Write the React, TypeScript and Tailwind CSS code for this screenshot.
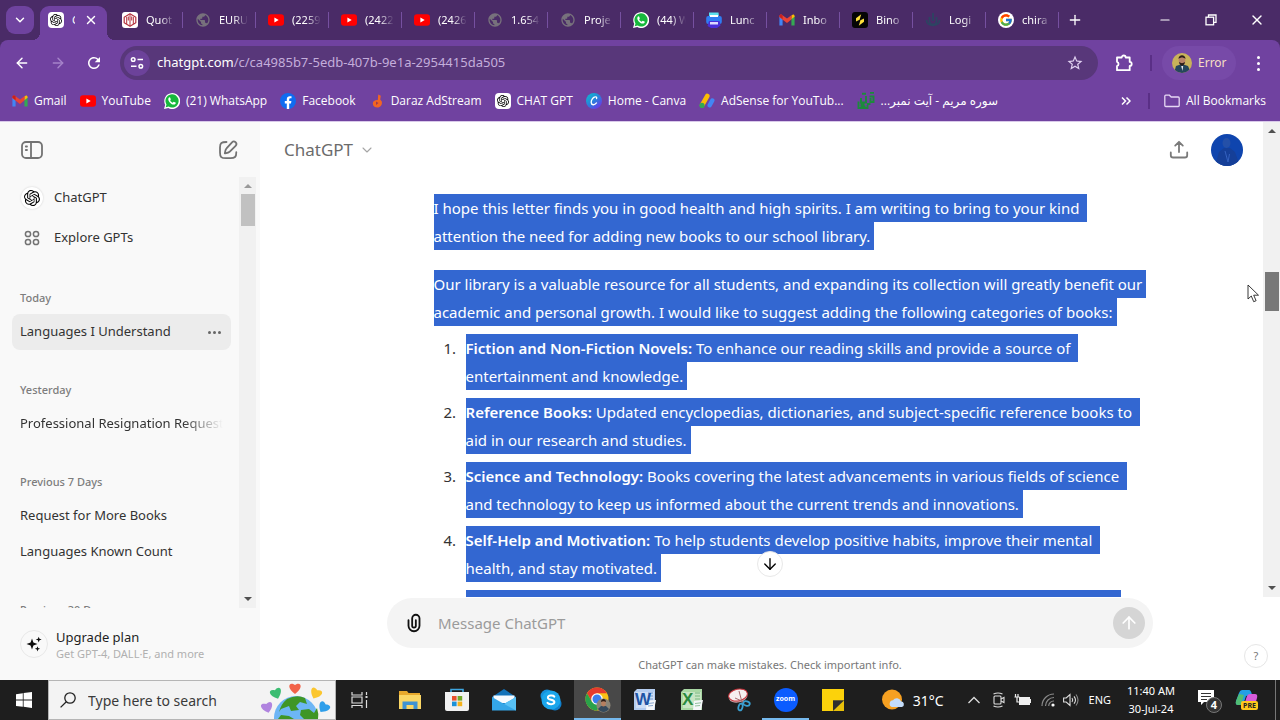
import type { ReactNode } from "react";
import { ArrowDown, ArrowLeft, ArrowRight, ArrowUp, ChevronDown, Minus, Plus, X } from "lucide-react";
import { SiOpenai } from "react-icons/si";
import { FcGoogle } from "react-icons/fc";
import { MdPublic, MdRefresh, MdStarBorder } from "react-icons/md";

/* ---------- site icons ---------- */

const YouTubeIcon = () => (
  <svg viewBox="0 0 16 16" className="size-4 shrink-0">
    <rect x="0" y="2.2" width="16" height="11.6" rx="3" fill="#f00" />
    <path d="M6.4 5.5v5l4.3-2.5z" fill="#fff" />
  </svg>
);

const GmailIcon = () => (
  <svg viewBox="0 0 16 16" className="size-4 shrink-0">
    <path d="M0.4 4v9.4h3.2V6.6z" fill="#4285f4" />
    <path d="M15.6 4v9.4h-3.2V6.6z" fill="#34a853" />
    <path d="M12.4 3.6v3.6l3.2-2.4V4c0-1.600-1.700-2-2.500-1z" fill="#fbbc04" />
    <path d="M0.400 4v1.200L8 11l4.400-3.400V3.300L8 6.600 3.100 2.900C2 2 .4 2.600.4 4z" fill="#ea4335" />
    <path d="M0.400 4.800l3.200 2.400V3.300L2.900 2.800C1.900 2.100.4 2.600.4 4z" fill="#c5221f" />
  </svg>
);

const WhatsAppIcon = () => (
  <svg viewBox="0 0 16 16" className="size-4 shrink-0">
    <path d="M0 16l1.200-4.200A8 8 0 1 1 4.300 15z" fill="#fff" />
    <path d="M1.700 14.300l.8-2.800A6.600 6.600 0 1 1 4.700 13.600z" fill="#16b83c" />
    <path
      d="M5.700 4.300c-.7 0-1.400.8-1.400 1.900 0 2.400 3 5.400 5.500 5.400 1.200 0 2-.8 2-1.600 0-.4-1.800-1.300-2.100-1.200-.4.100-.7.900-1 .9-.7 0-2.400-1.500-2.500-2.200 0-.4.600-.7.600-1 0-.4-.6-2.200-1.100-2.200z"
      fill="#fff"
    />
  </svg>
);

const FacebookIcon = () => (
  <svg viewBox="0 0 16 16" className="size-4 shrink-0">
    <circle cx="8" cy="8" r="8" fill="#0f6cf0" />
    <path d="M6.800 16v-5.500H4.800V8.100h2V6.400c0-2.100 1.200-3.200 3-3.200l1.700.1v2h-1c-1 0-1.300.6-1.300 1.200v1.600h2.200l-.4 2.400H9.200V16z" fill="#fff" />
  </svg>
);

const DarazIcon = () => (
  <svg viewBox="0 0 16 16" className="size-4 shrink-0">
    <path d="M9.200 1.500l2.600 1.200-.6 3.800 1.600 2c.7 3.500-1.500 6-4.400 6-2.600 0-4.600-1.500-4.600-4 0-2.200 1.900-3.500 5-3.400z" fill="#f26522" />
    <path d="M7 8.500l2.500 1.600L7 12z" fill="#a33a4c" />
  </svg>
);

const OpenAiTile = () => (
  <span className="flex size-4 shrink-0 items-center justify-center rounded-sm bg-white text-black">
    <SiOpenai className="size-3" />
  </span>
);

const CanvaIcon = () => (
  <svg viewBox="0 0 16 16" className="size-4 shrink-0">
    <defs>
      <linearGradient id="canva" x1="0" y1="0" x2="0.8" y2="1">
        <stop offset="0" stopColor="#08c4cc" />
        <stop offset="0.55" stopColor="#2b7fdc" />
        <stop offset="1" stopColor="#7330e8" />
      </linearGradient>
    </defs>
    <circle cx="8" cy="8" r="8" fill="url(#canva)" />
    <path d="M10.600 5.600c.5-1.400-.6-2-1.700-1.700C6.800 4.400 5 7.300 5.200 9.600c.2 2.600 3.200 3 5.300.3" fill="none" stroke="#fff" strokeWidth="1.300" strokeLinecap="round" />
  </svg>
);

const AdSenseIcon = () => (
  <svg viewBox="0 0 16 16" className="size-4 shrink-0">
    <path d="M8.300 3L3.200 12" stroke="#fbbc04" strokeWidth="4.600" strokeLinecap="round" />
    <circle cx="3" cy="12.400" r="2.600" fill="#34a853" />
    <path d="M13.300 7.500l-2.600 4.800" stroke="#4285f4" strokeWidth="4.400" strokeLinecap="round" />
  </svg>
);

const QuranIcon = () => (
  <svg viewBox="0 0 18 18" className="size-[18px] shrink-0" fill="none" stroke="#1c8a3c" strokeWidth="1.900">
    <path d="M5 1.800h4M13 .9h4M12.500 4.500h4v5.500h-3V6M9 4v6.500H3M4 6v4M1.500 9.500v6.500h9V13M3.500 12.500h4M3.500 14.500h5M10 12h3.500" />
  </svg>
);

const GlobeIcon = () => <MdPublic className="size-4 shrink-0 text-[#77717c]" />;

const QuotexIcon = () => (
  <svg viewBox="0 0 16 16" className="size-4 shrink-0">
    <rect width="16" height="16" rx="3" fill="#fff" />
    <path d="M2.200 5.200L8 1.800l5.800 3.400v5.600L8 14.200l-5.800-3.400z" fill="none" stroke="#b5323d" strokeWidth="1.200" strokeLinejoin="round" />
    <path d="M4.700 5v7M8 2v12M11.300 5v7M6.300 4.500v4M9.700 4.500v4" stroke="#b5323d" strokeWidth="1" />
  </svg>
);

const PrinterIcon = () => (
  <svg viewBox="0 0 16 16" className="size-4 shrink-0">
    <path d="M3 0.500h9.500L13 5H3z" fill="#5be0ee" />
    <rect x="0.200" y="4" width="15.600" height="8" rx="2" fill="#2f7df2" />
    <path d="M3 9h10.500l1 4.500L11 16H5l-3.500-2z" fill="#4a2fd8" />
    <rect x="4" y="3" width="8" height="2" fill="#fff" />
    <rect x="4" y="10" width="8" height="2.500" fill="#dcd9ff" />
  </svg>
);

const BinomoIcon = () => (
  <svg viewBox="0 0 16 16" className="size-4 shrink-0">
    <rect width="16" height="16" rx="3" fill="#050505" />
    <path d="M9.200 2.200L4 6.200v3.200l3.600-1.600z" fill="#ffe03a" />
    <path d="M6.800 13.800L12 9.800V6.600L8.400 8.200z" fill="#ffe03a" />
  </svg>
);

const LoginIcon = () => (
  <svg viewBox="0 0 16 16" className="size-4 shrink-0" fill="none" stroke="#2d4462" strokeWidth="1.800">
    <path d="M8 1v8M4.500 5v4a3.500 3.500 0 0 0 7 0V5M1.500 8c0 7 13 7 13 0" />
  </svg>
);

/* ---------- browser chrome ---------- */

const tabs: { title: string; icon: ReactNode }[] = [
  { title: "Quot", icon: <QuotexIcon /> },
  { title: "EURU", icon: <GlobeIcon /> },
  { title: "(2259", icon: <YouTubeIcon /> },
  { title: "(2422", icon: <YouTubeIcon /> },
  { title: "(2426", icon: <YouTubeIcon /> },
  { title: "1.654", icon: <GlobeIcon /> },
  { title: "Proje", icon: <GlobeIcon /> },
  { title: "(44) W", icon: <WhatsAppIcon /> },
  { title: "Lunc", icon: <PrinterIcon /> },
  { title: "Inbo", icon: <GmailIcon /> },
  { title: "Bino", icon: <BinomoIcon /> },
  { title: "Logi", icon: <LoginIcon /> },
  { title: "chira", icon: <span className="flex size-4 shrink-0 items-center justify-center rounded-full bg-white"><FcGoogle className="size-3.5" /></span> },
];

const bookmarks: { title: string; icon: ReactNode; rtl?: boolean }[] = [
  { title: "Gmail", icon: <GmailIcon /> },
  { title: "YouTube", icon: <YouTubeIcon /> },
  { title: "(21) WhatsApp", icon: <WhatsAppIcon /> },
  { title: "Facebook", icon: <FacebookIcon /> },
  { title: "Daraz AdStream", icon: <DarazIcon /> },
  { title: "CHAT GPT", icon: <OpenAiTile /> },
  { title: "Home - Canva", icon: <CanvaIcon /> },
  { title: "AdSense for YouTub...", icon: <AdSenseIcon /> },
  { title: "سوره مریم - آیت نمبر...", icon: <QuranIcon />, rtl: true },
];

function TabStrip() {
  return (
    <div className="flex h-10 items-end bg-[#4a2b67] text-white">
      <button aria-label="Search tabs" className="mb-1.5 ml-1.5 flex size-7 shrink-0 items-center justify-center rounded-[9px] bg-[#6f439f]">
        <ChevronDown className="size-3.5" strokeWidth={2.5} />
      </button>
      <div className="relative ml-1.5 mr-[3px] flex h-[34px] w-[67px] shrink-0 items-center rounded-t-[9px] bg-[#7042a0] px-2 pb-1.5 before:absolute before:-left-2 before:bottom-0 before:size-2 before:bg-[radial-gradient(circle_at_0_0,transparent_8px,#7042a0_8px)] after:absolute after:-right-2 after:bottom-0 after:size-2 after:bg-[radial-gradient(circle_at_100%_0,transparent_8px,#7042a0_8px)]">
        <OpenAiTile />
        <span className="ml-2 w-[3px] overflow-hidden text-[11px]">C</span>
        <button aria-label="Close tab" className="ml-[9px]">
          <X className="size-3.5" strokeWidth={2.5} />
        </button>
      </div>
      {tabs.map((t) => (
        <div key={t.title} className="mb-2.5 flex h-5 w-[73px] shrink-0 items-center pl-3 after:ml-auto after:h-4 after:w-px after:bg-[#7650a0]">
          {t.icon}
          <span className="ml-2 text-[11px] leading-5 whitespace-nowrap [mask-image:linear-gradient(to_right,#000_14px,transparent_29px)]">{t.title}</span>
        </div>
      ))}
      <button aria-label="New tab" className="mb-1.5 ml-0.5 flex size-7 shrink-0 items-center justify-center">
        <Plus className="size-4" strokeWidth={2} />
      </button>
      <div className="mb-px ml-auto flex h-[39px] shrink-0">
        <button aria-label="Minimize" className="flex w-[46px] items-center justify-center">
          <Minus className="size-3.5" strokeWidth={2} />
        </button>
        <button aria-label="Restore" className="flex w-[46px] items-center justify-center">
          <svg viewBox="0 0 12 12" className="size-3" fill="none" stroke="#fff" strokeWidth="1.300">
            <rect x="1" y="3.200" width="7.600" height="7.600" />
            <path d="M3.500 3.200V1h7.500v7.300H8.600" />
          </svg>
        </button>
        <button aria-label="Close" className="flex w-[46px] items-center justify-center">
          <X className="size-4" strokeWidth={2} />
        </button>
      </div>
    </div>
  );
}

function Toolbar() {
  return (
    <div className="flex h-[46px] items-center pl-1 text-white">
      <button aria-label="Back" className="flex w-9 shrink-0 justify-center"><ArrowLeft className="size-4" strokeWidth={2.2} /></button>
      <button aria-label="Forward" className="flex w-9 shrink-0 justify-center text-[#a583c9]"><ArrowRight className="size-4" strokeWidth={2.2} /></button>
      <button aria-label="Reload" className="flex w-9 shrink-0 justify-center"><MdRefresh className="size-[18px]" /></button>
      <div className="ml-2 flex h-[34px] min-w-0 flex-1 items-center rounded-full bg-[#58377a] px-1">
        <button aria-label="View site information" className="flex size-[26px] shrink-0 items-center justify-center rounded-full bg-[#6c429a]">
          <svg viewBox="0 0 14 14" className="size-3.5" fill="none" stroke="#fff" strokeWidth="1.500">
            <circle cx="3.200" cy="3.500" r="1.800" />
            <path d="M7.500 3.500H13M1 10.300h5.500" />
            <circle cx="10.800" cy="10.300" r="1.800" />
          </svg>
        </button>
        <div className="ml-[7px] flex-1 truncate text-[13px] text-[#c4aedb]" role="textbox" aria-label="Address">
          <span className="text-white">chatgpt.com</span>/c/ca4985b7-5edb-407b-9e1a-2954415da505
        </div>
        <button aria-label="Bookmark this tab" className="mr-2.5 text-[#e0d0f0]"><MdStarBorder className="size-[18px]" /></button>
      </div>
      <button aria-label="Extensions" className="ml-4 flex w-5 justify-center">
        <svg viewBox="0 0 20 20" className="size-5" fill="none" stroke="#fff" strokeWidth="1.800" strokeLinejoin="round">
          <path d="M3 4.500h4.700a2 2 0 0 1 4 0h4v4.400a2 2 0 0 1 0 4V17.200H3V13a2.200 2.200 0 0 0 0-4.200z" />
        </svg>
      </button>
      <span className="ml-4 h-4 w-0.5 bg-[#5a2f86]" />
      <button className="ml-2.5 flex h-[34px] w-[74px] items-center gap-1.5 rounded-full bg-[#774aa8] pl-2.5 text-[12px] text-[#f6dfc4]">
        <svg viewBox="0 0 20 20" className="size-5 shrink-0">
          <defs><clipPath id="face"><circle cx="10" cy="10" r="10" /></clipPath></defs>
          <g clipPath="url(#face)">
            <rect width="20" height="20" fill="#c8b25a" />
            <path d="M2 20l2-7 6-2 6 2 3 7z" fill="#25465c" />
            <ellipse cx="10" cy="7.500" rx="3.300" ry="4.500" fill="#b98468" />
            <path d="M6.500 6c0-5 7-5 7 0-2-2-5-2-7 0zM7 9c1 5 5 5 6 0-2 1.500-4 1.500-6 0z" fill="#2a1d1a" />
            <path d="M9.200 13h2l-.7 5z" fill="#e8e8ee" />
          </g>
        </svg>
        Error
      </button>
      <button aria-label="Menu" className="flex w-11 flex-col items-center gap-[3px]">
        <span className="size-[3px] rounded-full bg-white" />
        <span className="size-[3px] rounded-full bg-white" />
        <span className="size-[3px] rounded-full bg-white" />
      </button>
    </div>
  );
}

function BookmarksBar() {
  return (
    <nav aria-label="Bookmarks" className="flex h-9 items-center border-b border-[#d9c9ea] pb-1.5 pl-3 pr-3.5 font-['Open_Sans','DejaVu_Sans',sans-serif] text-[12px] whitespace-nowrap text-white">
      <div className="flex gap-[13px]">
        {bookmarks.map((b) => (
          <a key={b.title} href="#" className="flex items-center gap-1.5">
            {b.icon}
            <span dir={b.rtl ? "rtl" : "ltr"}>{b.title}</span>
          </a>
        ))}
      </div>
      <button aria-label="More bookmarks" className="ml-auto">
        <svg viewBox="0 0 10 10" className="size-2.5" fill="none" stroke="#fff" strokeWidth="1.500"><path d="M1 1.500L4.500 5 1 8.500M5.500 1.500L9 5 5.500 8.500" /></svg>
      </button>
      <span className="ml-[17px] h-4 w-0.5 bg-[#5a2f86]" />
      <button className="ml-3.5 flex items-center gap-1.5">
        <svg viewBox="0 0 16 14" className="h-3.5 w-4" fill="none" stroke="#e6d8f4" strokeWidth="1.300"><path d="M.8 2.200q0-1 1-1h3.600l1.800 1.800h7q1 0 1 1v7.500q0 1-1 1H1.800q-1 0-1-1z" /></svg>
        All Bookmarks
      </button>
    </nav>
  );
}

/* ---------- sidebar ---------- */

const Triangle = ({ down = false, color }: { down?: boolean; color: string }) => (
  <svg viewBox="0 0 8 4" className="h-1 w-2"><path d={down ? "M0 0h8L4 4z" : "M0 4h8L4 0z"} fill={color} /></svg>
);

const groups = [
  { name: "Today", items: ["Languages I Understand"] },
  { name: "Yesterday", items: ["Professional Resignation Request"] },
  { name: "Previous 7 Days", items: ["Request for More Books", "Languages Known Count"] },
  { name: "Previous 30 Days", items: [] },
];

function Sidebar() {
  return (
    <aside className="flex w-[260px] shrink-0 flex-col bg-[#f9f9f9] text-[13px] text-[#333]">
      <div className="flex h-[55px] shrink-0 items-center justify-between pl-[21px] pr-[22px] text-[#737373]">
        <button aria-label="Close sidebar">
          <svg viewBox="0 0 22 18" className="h-[18px] w-[22px]" fill="none" stroke="currentColor" strokeWidth="1.800" strokeLinecap="round">
            <rect x="1" y="1" width="20" height="16" rx="4" />
            <path d="M10 1v16M4.800 5.500h1.200M4.800 9h1.200" />
          </svg>
        </button>
        <button aria-label="New chat">
          <svg viewBox="0 0 20 20" className="size-5" fill="none" stroke="currentColor" strokeWidth="1.800" strokeLinecap="round" strokeLinejoin="round">
            <path d="M8.500 2C3.500 2 2 2.800 2 7.500v5C2 17 3.200 18.200 8 18.200h4.500c4.300 0 5.800-1.200 5.800-6" />
            <path d="M14 2.300a2.500 2.500 0 0 1 3.600 3.500l-5.800 5.900c-1.200 1.200-3 1.400-5 1.700.3-2 .5-3.800 1.700-5z" />
          </svg>
        </button>
      </div>
      <div className="flex min-h-0 flex-1 pr-1">
        <nav aria-label="Chat history" className="min-w-0 flex-1 overflow-hidden pl-3 pr-2 pt-px">
          <a href="#" className="flex h-10 items-center gap-[11px] pl-[9px]">
            <span className="flex size-[22px] items-center justify-center rounded-full bg-white shadow-[0_0_2px_#ccc]"><SiOpenai className="size-4 text-black" /></span>
            ChatGPT
          </a>
          <a href="#" className="flex h-10 items-center gap-[11px] pl-[9px]">
            <svg viewBox="0 0 22 22" className="size-[22px]" fill="none" stroke="#737373" strokeWidth="1.500">
              <circle cx="7" cy="7" r="2.600" /><circle cx="15" cy="7" r="2.600" />
              <circle cx="7" cy="15" r="2.600" /><circle cx="15" cy="15" r="2.600" />
            </svg>
            Explore GPTs
          </a>
          {groups.map((g) => (
            <section key={g.name} className="mt-5">
              <h3 className="flex h-9 items-center pl-2 pt-1 text-[11px] font-medium text-[#7d7d7d]">{g.name}</h3>
              {g.items.map((item) => (
                <div key={item} className={item === "Languages I Understand" ? "flex h-9 items-center rounded-lg bg-[#ececec] px-2" : "flex h-9 items-center px-2"}>
                  <a href="#" className={item.startsWith("Professional") ? "flex-1 overflow-hidden whitespace-nowrap [mask-image:linear-gradient(to_right,#000_80%,transparent)]" : "flex-1 overflow-hidden whitespace-nowrap"}>{item}</a>
                  {item === "Languages I Understand" && (
                    <button aria-label="Options" className="mr-0.5 flex gap-0.5">
                      <span className="size-[3px] rounded-full bg-[#666]" /><span className="size-[3px] rounded-full bg-[#666]" /><span className="size-[3px] rounded-full bg-[#666]" />
                    </button>
                  )}
                </div>
              ))}
            </section>
          ))}
        </nav>
        <div className="flex w-[17px] shrink-0 flex-col items-center bg-[#f1f1f1] py-[7px]" aria-hidden="true">
          <Triangle color="#999" />
          <span className="mt-1.5 h-8 w-3.5 bg-[#c1c1c1]" />
          <span className="mt-auto"><Triangle down color="#505050" /></span>
        </div>
      </div>
      <button className="flex h-[72px] shrink-0 items-center gap-2 pl-5 text-left">
        <span className="flex size-7 items-center justify-center rounded-full border border-[#e8e8e8]">
          <svg viewBox="0 0 16 16" className="size-4" fill="#0d0d0d">
            <path d="M6 2.500l1.400 4.100L11.500 8 7.400 9.400 6 13.500 4.600 9.400.5 8l4.100-1.400zM12.700.7l.8 2 2.200.8-2.200.8-.8 2.200-.8-2.200-2.200-.8 2.200-.8zM11.500 10.300l.7 1.800 1.900.7-1.900.7-.7 1.900-.7-1.900-1.900-.7 1.900-.7z" />
          </svg>
        </span>
        <span className="flex flex-col pt-0.5">
          <span className="leading-[18px] text-[#1f1f1f]">Upgrade plan</span>
          <span className="text-[11px] leading-4 text-[#b0b0b0]">Get GPT-4, DALL·E, and more</span>
        </span>
      </button>
    </aside>
  );
}

/* ---------- conversation ---------- */

function Line({ children, wrapped = false }: { children: ReactNode; wrapped?: boolean }) {
  return <span className={wrapped ? "block w-fit bg-[#3367d1] pr-2 whitespace-nowrap" : "block w-fit bg-[#3367d1] pr-1 whitespace-nowrap"}>{children}</span>;
}

const suggestions = [
  { title: "Fiction and Non-Fiction Novels:", first: "To enhance our reading skills and provide a source of", second: "entertainment and knowledge." },
  { title: "Reference Books:", first: "Updated encyclopedias, dictionaries, and subject-specific reference books to", second: "aid in our research and studies." },
  { title: "Science and Technology:", first: "Books covering the latest advancements in various fields of science", second: "and technology to keep us informed about the current trends and innovations." },
  { title: "Self-Help and Motivation:", first: "To help students develop positive habits, improve their mental", second: "health, and stay motivated." },
  { title: "History and Culture:", first: "Books on world history, local heritage, and diverse cultures to broaden", second: "our understanding." },
];

function Conversation() {
  return (
    <main className="flex min-w-0 flex-1 flex-col bg-white">
      <div className="relative flex min-h-0 flex-1">
        <div className="flex min-w-0 flex-1 flex-col">
          <header className="flex h-14 shrink-0 items-center pl-6 pr-5">
            <button className="flex items-center gap-1.5 text-[17px] text-[#6b6b6b]">
              ChatGPT <ChevronDown className="size-4 text-[#a5a5a5]" strokeWidth={1.6} />
            </button>
            <button aria-label="Share" className="ml-auto">
              <svg viewBox="0 0 20 20" className="size-5" fill="none" stroke="#7a7a7a" strokeWidth="1.800" strokeLinecap="round" strokeLinejoin="round">
                <path d="M10 12V2.200M6.200 5.600L10 1.800l3.800 3.800M1.800 12.500v2.700q0 2.300 2.300 2.300h11.800q2.300 0 2.300-2.300v-2.700" />
              </svg>
            </button>
            <button aria-label="Account" className="ml-[22px]">
              <svg viewBox="0 0 32 32" className="size-8">
                <defs><clipPath id="account"><circle cx="16" cy="16" r="16" /></clipPath></defs>
                <g clipPath="url(#account)">
                  <rect width="32" height="32" fill="#0f45ae" />
                  <path d="M4 32l4-14 5-4h6l5 4 5 14z" fill="#153f98" />
                  <ellipse cx="15.500" cy="9" rx="4" ry="5" fill="#2450a8" />
                  <path d="M14 17l3 11 1.500-8" fill="none" stroke="#3562c0" />
                </g>
              </svg>
            </button>
          </header>
          <div className="min-h-0 flex-1 overflow-hidden pl-4">
            <article className="mx-auto max-w-[768px] pl-12 pt-4 text-[15px] leading-7 text-white">
              <p className="mb-5">
                <Line wrapped>I hope this letter finds you in good health and high spirits. I am writing to bring to your kind</Line>
                <Line>attention the need for adding new books to our school library.</Line>
              </p>
              <p className="mb-2">
                <Line>Our library is a valuable resource for all students, and expanding its collection will greatly benefit our</Line>
                <Line>academic and personal growth. I would like to suggest adding the following categories of books:</Line>
              </p>
              <ol className="flex flex-col gap-2">
                {suggestions.map((s, i) => (
                  <li key={s.title} className="flex">
                    <span className="w-8 shrink-0 pl-2.5 text-[#333]">{i + 1}.</span>
                    <div>
                      <Line wrapped><b className="font-semibold">{s.title}</b> {s.first}</Line>
                      <Line>{s.second}</Line>
                    </div>
                  </li>
                ))}
              </ol>
            </article>
          </div>
        </div>
        <div className="flex w-[17px] shrink-0 flex-col items-center bg-[#f1f1f1] py-[7px]" aria-hidden="true">
          <Triangle color="#505050" />
          <span className="mt-[139px] h-[39px] w-3.5 bg-[#787878]" />
          <span className="mt-auto"><Triangle down color="#505050" /></span>
        </div>
        <button aria-label="Scroll to bottom" className="absolute bottom-5 left-1/2 flex size-[26px] -translate-x-1/2 items-center justify-center rounded-full border border-[#e8e8e8] bg-white text-black">
          <ArrowDown className="size-[18px]" strokeWidth={1.8} />
        </button>
      </div>
      <div className="relative flex h-[83px] shrink-0 flex-col items-center px-4">
        <form className="mt-px flex h-[50px] w-full max-w-[766px] items-center rounded-full bg-[#f4f4f4] pl-4 pr-2">
          <button type="button" aria-label="Attach files" className="shrink-0">
            <svg viewBox="0 0 24 24" className="size-[22px]" fill="#111">
              <path d="M9 7a5 5 0 0 1 10 0v8a7 7 0 1 1-14 0V9a1 1 0 0 1 2 0v6a5 5 0 0 0 10 0V7a3 3 0 1 0-6 0v8a1 1 0 1 0 2 0V9a1 1 0 1 1 2 0v6a3 3 0 1 1-6 0z" />
            </svg>
          </button>
          <input aria-label="Message ChatGPT" placeholder="Message ChatGPT" className="ml-[13px] min-w-0 flex-1 bg-transparent text-[15px] outline-none placeholder:text-[#9b9b9b]" />
          <button type="button" aria-label="Send" className="flex size-8 shrink-0 items-center justify-center rounded-full bg-[#d5d5d5] text-white">
            <ArrowUp className="size-5" />
          </button>
        </form>
        <p className="mt-[7px] text-[11px] leading-5 text-[#777]">ChatGPT can make mistakes. Check important info.</p>
        <button aria-label="Help" className="absolute right-3 bottom-3 flex size-6 items-center justify-center rounded-full border border-[#e6e6e6] text-[11px] text-[#777]">?</button>
      </div>
    </main>
  );
}

/* ---------- taskbar ---------- */

const Office = ({ letter, color, light }: { letter: string; color: string; light: string }) => (
  <svg viewBox="0 0 24 24" className="size-6">
    <path d="M1 4l3-3h18v21H1z" fill={light} />
    <path d="M3 4h18v16H3z" fill="#fff" opacity="0.350" />
    <path d="M15 5h5M15 8h5M15 11h5" stroke={color} opacity="0.500" />
    <path d="M14 13l9-1-2 10h-8z" fill="#f5f7fa" />
    <path d="M15 15.500l6-.7M15 18l5-.5" stroke={color} opacity="0.500" />
    <text x="2" y="17" fontSize="17" fontWeight="bold" fontFamily="Liberation Sans, sans-serif" fill={color}>{letter}</text>
  </svg>
);

const apps: { name: string; icon: ReactNode; state?: string }[] = [
  {
    name: "File Explorer",
    icon: (
      <svg viewBox="0 0 22 20" className="h-5 w-[22px]">
        <path d="M0 1h8l1.500 2H21v6H0z" fill="#e8a92c" />
        <rect y="5" width="22" height="14" fill="#fbd765" />
        <path d="M3.500 19v-7.500h15V19h-4v-4h-7v4z" fill="#3f93d2" />
      </svg>
    ),
  },
  {
    name: "Microsoft Store",
    icon: (
      <svg viewBox="0 0 24 24" className="size-6">
        <path d="M6 6V1.500h12V6" fill="none" stroke="#3ea6e0" strokeWidth="1.600" />
        <path d="M0 4h24v17q0 2-2 2H2q-2 0-2-2z" fill="#f1f1f1" />
        <path d="M7 8h4.600v4.600H7z" fill="#e8502c" /><path d="M12.600 8h4.600v4.600h-4.600z" fill="#72a928" />
        <path d="M7 13.600h4.600v4.600H7z" fill="#1b91d8" /><path d="M12.600 13.600h4.600v4.600h-4.600z" fill="#f5b21b" />
      </svg>
    ),
  },
  {
    name: "Mail",
    icon: (
      <svg viewBox="0 0 24 22" className="h-[22px] w-6">
        <path d="M0 8l12-8 12 8v13H0z" fill="#1272b9" />
        <path d="M1.500 6.500h21V14H1.500z" fill="#f6fbff" />
        <path d="M0 8l12 7 12-7v13.500H0z" fill="#34a6e8" /><path d="M24 8v13.500L8 12.600l4 2.400z" fill="#58c1f5" />
      </svg>
    ),
  },
  {
    name: "Skype",
    icon: (
      <svg viewBox="0 0 22 22" className="size-[22px]">
        <circle cx="7" cy="7" r="6.500" fill="#1690dc" /><circle cx="15" cy="15" r="6.500" fill="#1080ce" /><circle cx="11" cy="11" r="9.500" fill="#1ba6ec" />
        <path d="M14.300 7.600c-1-1.500-6.400-1.500-6.400 1.100 0 2.700 6.500 1.500 6.500 4.400 0 2.700-5.800 2.500-6.900.8" fill="none" stroke="#fff" strokeWidth="2" strokeLinecap="round" />
      </svg>
    ),
  },
  {
    name: "Chrome",
    state: "active",
    icon: (
      <svg viewBox="0 0 26 26" className="size-[26px]">
        <circle cx="12" cy="12" r="11.500" fill="#fbc116" />
        <path d="M2 6.300A11.500 11.500 0 0 1 22 6.300H12L7 15z" fill="#e53a2e" />
        <path d="M2 6.200A11.500 11.500 0 0 0 12 23.500l5-8.500-10 0z" fill="#2aa24a" />
        <circle cx="12" cy="12" r="5.800" fill="#fff" /><circle cx="12" cy="12" r="4.500" fill="#3b7ded" />
        <circle cx="18.500" cy="18.500" r="7" fill="#8a8578" />
        <path d="M13 22l3-3h5l3 3c-3 4-8 4-11 0z" fill="#34495c" />
        <ellipse cx="18.500" cy="16" rx="2.400" ry="3.400" fill="#b57f60" /><path d="M16 15c0-4 5-4 5 0-1.500-1-3.500-1-5 0z" fill="#2b1d18" />
      </svg>
    ),
  },
  { name: "Word", icon: <Office letter="W" color="#1f55a5" light="#b4cdf0" /> },
  { name: "Excel", icon: <Office letter="X" color="#2b8a3e" light="#a9d8a4" /> },
  {
    name: "Snipping Tool",
    icon: (
      <svg viewBox="0 0 24 24" className="size-6">
        <ellipse cx="11" cy="8.500" rx="9.500" ry="6" fill="#c9a3a5" transform="rotate(-12 11 8)" /><ellipse cx="11" cy="7" rx="9.500" ry="5.800" fill="#f6f0f0" stroke="#c9343c" transform="rotate(-12 11 7)" />
        <path d="M12 3l3.500 13M8 10l9 4" stroke="#a86a6e" />
        <ellipse cx="13.500" cy="19" rx="2" ry="3.500" fill="none" stroke="#3a9fd0" strokeWidth="1.800" transform="rotate(15 13.500 19)" /><ellipse cx="19.500" cy="15.500" rx="3.300" ry="2.200" fill="none" stroke="#3a9fd0" strokeWidth="1.800" transform="rotate(15 19.500 15.500)" />
      </svg>
    ),
  },
  { name: "Zoom", state: "open", icon: <span className="flex size-6 items-center justify-center rounded-full bg-[#0b5cff] pb-0.5 text-[7px] font-bold text-white">zoom</span> },
  {
    name: "Sticky Notes",
    icon: (
      <svg viewBox="0 0 22 22" className="size-[22px]">
        <path d="M0 0h22v22H0z" fill="#fcd20b" /><path d="M11 11.500h11V22H11z" fill="#4a4a4a" /><path d="M11 11.500h11L11 22z" fill="#2f2f2f" /><path d="M11 22h11V11.500z" fill="#e8c00a" />
      </svg>
    ),
  },
];

const Heart = ({ x, y, fill, turn }: { x: number; y: number; fill: string; turn: number }) => (
  <path transform={`translate(${x} ${y}) rotate(${turn})`} d="M0 6C-9-0.500-6-7 0-3 6-7 9-0.500 0 6z" fill={fill} />
);

function Taskbar() {
  return (
    <footer className="flex h-10 shrink-0 items-stretch bg-[#1e1e1e] text-white">
      <button aria-label="Start" className="flex w-12 shrink-0 items-center justify-center">
        <svg viewBox="0 0 16 16" className="size-4" fill="#fff"><path d="M0 2.200l6.800-1v6.400H0zM7.600 1.100L16 0v7.600H7.600zM0 8.400h6.800v6.400L0 13.900zM7.600 8.400H16V16l-8.400-1.200z" /></svg>
      </button>
      <label className="flex w-72 shrink-0 items-center overflow-hidden border border-[#b5b5b5] bg-[#f3f3f3] pl-[11px]">
        <svg viewBox="0 0 16 16" className="size-4 shrink-0" fill="none" stroke="#222" strokeWidth="1.300"><circle cx="10" cy="6" r="5.200" /><path d="M6.300 9.700L.6 15.400" /></svg>
        <input aria-label="Search" placeholder="Type here to search" className="ml-3 w-40 bg-transparent text-[14px] outline-none placeholder:text-[#3a3a3a]" />
        <svg viewBox="0 0 72 38" className="ml-auto mr-0.5 h-[38px] w-[72px] shrink-0">
          <circle cx="35" cy="37" r="22" fill="#6db6f5" />
          <path d="M26 18q10-5 18-1l2 6-7-2-4 4 3 4-8 1-2-5-8 3-2 3q2-8 8-13zM40 29l8-1 5 4 3-5q2 6 1 11H43l-4-4zM20 34l8 1 5 3H17z" fill="#3f9626" />
          <Heart x={34} y={7} fill="#f26248" turn={0} /><Heart x={15} y={12} fill="#3cbd72" turn={-20} /><Heart x={55} y={12} fill="#fbc62f" turn={25} />
          <Heart x={6} y={26} fill="#b084df" turn={-15} /><Heart x={63} y={26} fill="#2d9eea" turn={35} />
        </svg>
      </label>
      <button aria-label="Task view" className="mr-[3px] flex w-[47px] shrink-0 items-center justify-center">
        <svg viewBox="0 0 18 16" className="h-4 w-[18px]" fill="none" stroke="#ddd" strokeWidth="1.200"><path d="M1 0v3h10V0M1 16v-2.500h10V16M1 5h10v6H1zM15.500 0v3M15.500 8v8" /><path d="M14.500 5h2" strokeWidth="2" /></svg>
      </button>
      {apps.map((a) => (
        <button
          key={a.name}
          aria-label={a.name}
          className={
            a.state === "active"
              ? "flex w-[47px] shrink-0 items-center justify-center border-y-2 border-[#484848] border-b-[#76b9ed] bg-[#484848]"
              : a.state === "open"
                ? "flex w-[47px] shrink-0 items-center justify-center border-y-2 border-transparent border-b-[#76b9ed]"
                : "flex w-[47px] shrink-0 items-center justify-center"
          }
        >
          {a.icon}
        </button>
      ))}
      <div className="ml-auto flex shrink-0 items-center">
        <button className="flex items-center gap-2 text-[14px]">
          <svg viewBox="0 0 24 22" className="h-[22px] w-6"><circle cx="11" cy="10.500" r="10" fill="#f6a021" /><path d="M11 18a3.500 3.500 0 0 1 1-6.800 4.500 4.500 0 0 1 8 1A3 3 0 0 1 21 18z" fill="#c4dcfa" /></svg>
          31°C
        </button>
        <svg viewBox="0 0 12 8" className="ml-6 h-2 w-3" fill="none" stroke="#ddd" strokeWidth="1.300"><path d="M.5 7L6 1.500 11.500 7" /></svg>
        <svg viewBox="0 0 14 16" className="ml-3 h-4 w-3.5" fill="none" stroke="#ddd" strokeWidth="1.100"><rect x="2" y="4" width="7" height="8" rx="1" /><path d="M9 7l3-1.500v5L9 9M1.500 2Q6 0 10.500 2M1.500 14q4.500 2 9 0" /></svg>
        <svg viewBox="0 0 17 12" className="ml-2 h-3 w-[17px]" fill="#eee"><path d="M5 3h11v8H5zM16 5h1v4h-1z" /><path d="M1.500 0v3M4 0v3M.5 3h5M3 3v5h2" fill="none" stroke="#eee" strokeWidth="1.200" /></svg>
        <svg viewBox="0 0 14 14" className="ml-2.5 size-3.5" fill="none" stroke="#8a8a8a" strokeWidth="1.200"><path d="M1 13A12 12 0 0 1 13 1M4.500 13A8.500 8.500 0 0 1 13 4.500M7.700 13A5 5 0 0 1 13 8" /><circle cx="12" cy="12" r="1" fill="#fff" stroke="#fff" /></svg>
        <svg viewBox="0 0 16 14" className="ml-2 h-3.5 w-4" fill="none" stroke="#ddd" strokeWidth="1.100"><path d="M.6 5h2.600L7 1.500v11L3.200 9H.6zM9 5q1.500 2 0 4M11 3.300q3 3.700 0 7.400" /><path d="M13 1.500q4 5.500 0 11" stroke="#888" /></svg>
        <span className="ml-2.5 text-[11px]">ENG</span>
        <div className="ml-3.5 w-[52px] text-center text-[11px] leading-[18px] whitespace-nowrap"><div>11:40 AM</div><div>30-Jul-24</div></div>
        <button aria-label="Notifications" className="ml-5">
          <svg viewBox="0 0 26 26" className="size-[26px]"><path d="M1 3h16v12H7l-3 3v-3H1z" fill="#fff" /><path d="M4 6.500h10M4 9.500h10M4 12.500h6" stroke="#333" /><circle cx="17" cy="18" r="7.500" fill="#333" stroke="#777" /><text x="17" y="22" fontSize="11" fontWeight="bold" textAnchor="middle" fill="#fff">4</text></svg>
        </button>
        <button aria-label="Copilot" className="ml-3 mr-4">
          <svg viewBox="0 0 24 24" className="size-6">
            <path d="M7 2h7q2 0 3 5l-6 1-3 9H3q-3 0-2-4L4 5q1-3 3-3z" fill="#239fe4" /><path d="M4 6l5 1-3 10H3q-3 0-2-4z" fill="#51bd74" />
            <path d="M15 6h5q3 0 2 4l-2 7H9l3-9q1-2 3-2z" fill="#d55bd9" /><rect x="6" y="13" width="17" height="9" rx="2" fill="#ffc81e" />
            <text x="14.500" y="20.300" fontSize="7" fontWeight="bold" textAnchor="middle" fill="#222">PRE</text>
          </svg>
        </button>
        <span className="mr-1 h-10 w-px bg-[#777]" />
      </div>
    </footer>
  );
}

export default function App() {
  return (
    <div className="relative flex h-screen flex-col overflow-hidden font-['Noto_Sans','DejaVu_Sans',sans-serif]">
      <TabStrip />
      <div className="shrink-0 bg-[#4a2b67]">
        <div className="rounded-t-lg bg-[#7042a0]">
          <Toolbar />
          <BookmarksBar />
        </div>
      </div>
      <div className="flex min-h-0 flex-1">
        <Sidebar />
        <Conversation />
      </div>
      <Taskbar />
      <svg viewBox="0 0 13 19" className="absolute top-[284px] right-5 h-[19px] w-[13px]" aria-hidden="true">
        <path d="M1 1v14l3.300-3 2.400 5.700 2.400-1-2.400-5.500H11.500z" fill="#fff" stroke="#222" strokeWidth="0.900" />
      </svg>
    </div>
  );
}
